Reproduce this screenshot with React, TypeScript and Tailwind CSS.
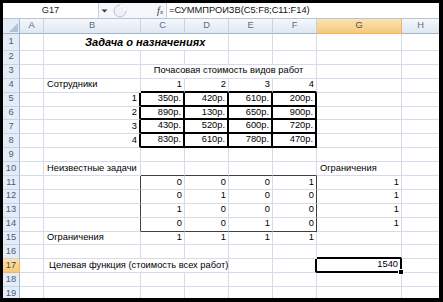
import React from "react";

type B = "g" | "t" | "k";
type Cell = { v?: string; a?: "l" | "r" | "c"; r?: B; b?: B; span?: 3 | 4; kind?: "title" | "obj" | "active" };

const RB: Record<B, string> = {
  g: "border-r border-r-[#d5dce7]",
  t: "border-r border-r-[#404040]",
  k: "border-r-2 border-r-black",
};
const BB: Record<B, string> = {
  g: "border-b border-b-[#d5dce7]",
  t: "border-b border-b-[#404040]",
  k: "border-b-2 border-b-black",
};
const AL = {
  l: "justify-start pl-[3px]",
  r: "justify-end pr-[2px]",
  c: "justify-center",
};

const E = (n: number): Cell[] => Array.from({ length: n }, () => ({}));

const costs = [
  ["350р.", "420р.", "610р.", "200р."],
  ["890р.", "130р.", "650р.", "900р."],
  ["430р.", "520р.", "600р.", "720р."],
  ["830р.", "610р.", "780р.", "470р."],
];
const mat = [
  ["0", "0", "0", "1"],
  ["0", "1", "0", "0"],
  ["1", "0", "0", "0"],
  ["0", "0", "1", "0"],
];

const rows: Cell[][] = [
  [{}, { v: "Задача о назначениях", span: 3, kind: "title" }, {}, {}, {}, {}],
  E(8),
  [{}, {}, { v: "Почасовая стоимость видов работ", span: 4, a: "c" }, {}, {}],
  [
    {},
    { v: "Сотрудники" },
    { v: "1", a: "r", b: "k" },
    { v: "2", a: "r", b: "k" },
    { v: "3", a: "r", b: "k" },
    { v: "4", a: "r", b: "k" },
    {},
    {},
  ],
  ...costs.map((r, i): Cell[] => [
    {},
    { v: String(i + 1), a: "r", r: "k" },
    ...r.map((v): Cell => ({ v, a: "r", r: "k", b: "k" })),
    {},
    {},
  ]),
  E(8),
  [{}, { v: "Неизвестные задачи" }, { b: "t" }, { b: "t" }, { b: "t" }, { b: "t" }, { v: "Ограничения" }, {}],
  ...mat.map((r, i): Cell[] => [
    {},
    { r: "t" },
    ...r.map((v, j): Cell => ({ v, a: "r", r: j === 3 ? "t" : "g", b: i === 3 ? "t" : "g" })),
    { v: "1", a: "r" },
    {},
  ]),
  [{}, { v: "Ограничения" }, { v: "1", a: "r" }, { v: "1", a: "r" }, { v: "1", a: "r" }, { v: "1", a: "r" }, {}, {}],
  [{}, {}, {}, {}, {}, {}, { b: "k" }, {}],
  [
    {},
    { v: "Целевая функция (стоимость всех работ)", span: 3, kind: "obj" },
    {},
    { r: "k" },
    { v: "1540", a: "r", r: "k", b: "k", kind: "active" },
    {},
  ],
  E(8),
  E(8),
];

const letters = ["A", "B", "C", "D", "E", "F", "G", "H"];

function DataCell({ c }: { c: Cell }) {
  const cls = [
    "relative flex items-center whitespace-nowrap text-black",
    RB[c.r ?? "g"],
    BB[c.b ?? "g"],
    AL[c.a ?? "l"],
    c.span === 3 ? "col-span-3" : c.span === 4 ? "col-span-4" : "",
  ].join(" ");
  if (c.kind === "title") {
    return (
      <div className={cls}>
        <span className="pl-[38px] text-[11px] font-bold italic">{c.v}</span>
      </div>
    );
  }
  if (c.kind === "obj") {
    return (
      <div className={cls}>
        <span className="pl-[2px]">{c.v}</span>
      </div>
    );
  }
  return (
    <div className={cls}>
      {c.v}
      {c.kind === "active" && (
        <div className="absolute -right-[4px] -bottom-[4px] z-10 h-[6px] w-[6px] border border-white bg-black" />
      )}
    </div>
  );
}

export default function App() {
  return (
    <div className="h-[302px] w-[443px] overflow-hidden bg-black pb-[4px] pl-[3px] pr-[4px] pt-[3px] font-['Liberation_Sans',Arial,sans-serif] text-[9.3px]">
      <div className="flex h-full w-full flex-col overflow-hidden bg-white">
        {/* formula bar */}
        <div className="flex h-[16px] shrink-0 items-stretch border-b border-b-[#b4c4d6] bg-[#f3f6fa]">
          <div className="flex w-[96px] items-center justify-center border-r border-r-[#c4cfdc] bg-white text-[#222]">
            G17
          </div>
          <div className="flex w-[67px] items-center">
            <svg width="7" height="4" viewBox="0 0 7 4" className="ml-[2px]">
              <path d="M0.5 0.5 L6.5 0.5 L3.5 3.5 Z" fill="#3a3a3a" />
            </svg>
            <svg width="14" height="14" viewBox="0 0 14 14" className="ml-[5px]">
              <circle cx="7" cy="7" r="6" fill="#eef2f7" stroke="#b7c3d1" />
              <path d="M7 1.5 A5.5 5.5 0 0 1 12.5 7" stroke="#ffffff" strokeWidth="1.5" fill="none" />
            </svg>
            <span className="ml-auto mr-[3px] font-['Liberation_Serif',serif] text-[10px] italic text-[#333]">
              f<span className="text-[7px]">x</span>
            </span>
          </div>
          <div className="flex flex-1 items-center border-l border-l-[#c4cfdc] bg-white pl-[2px] text-[#111]">
            =СУММПРОИЗВ(C5:F8;C11:F14)
          </div>
        </div>
        {/* sheet */}
        <div className="grid grid-cols-[17px_24px_97px_44px_44px_44px_44px_85px_38px] grid-rows-[15px_17px_repeat(18,13.9px)]">
          <div className="flex items-end justify-end border-b border-r border-b-[#9eb6ce] border-r-[#9eb6ce] bg-[#e4ecf7]">
            <svg width="12" height="11" viewBox="0 0 12 11">
              <path d="M2 10 L11 10 L11 1 Z" fill="#b3c1d3" />
            </svg>
          </div>
          {letters.map((l) =>
            l === "G" ? (
              <div
                key={l}
                className="flex items-center justify-center border-b border-r border-b-[#f2b454] border-r-[#e8b96a] bg-linear-to-b from-[#fbe3b4] to-[#f4c878] text-[#5a4a30]"
              >
                {l}
              </div>
            ) : (
              <div
                key={l}
                className="flex items-center justify-center border-b border-r border-b-[#9eb6ce] border-r-[#c6d3e2] bg-linear-to-b from-[#f5f8fc] to-[#dfe7f1] text-[#5a6c85]"
              >
                {l}
              </div>
            )
          )}
          {rows.map((r, i) => (
            <React.Fragment key={i}>
              {i === 16 ? (
                <div className="flex items-center justify-center border-b border-r border-b-[#e8b96a] border-r-[#f2b454] bg-linear-to-b from-[#fbe0ad] to-[#f5c97c] text-[#5a4a30]">
                  {i + 1}
                </div>
              ) : (
                <div className="flex items-center justify-center border-b border-r border-b-[#c6d3e2] border-r-[#9eb6ce] bg-[#e4ecf7] text-[#4a5d78]">
                  {i + 1}
                </div>
              )}
              {r.map((c, j) => (
                <DataCell key={j} c={c} />
              ))}
            </React.Fragment>
          ))}
        </div>
      </div>
    </div>
  );
}
